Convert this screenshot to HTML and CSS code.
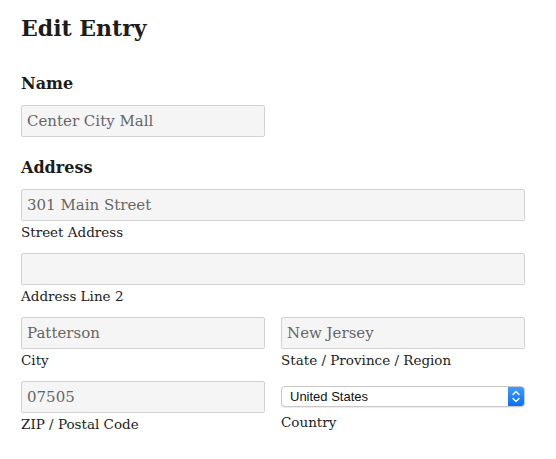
FILE: index.html
```html
<!DOCTYPE html>
<html>
<head>
<meta charset="utf-8">
<link rel="stylesheet" href="styles.css">
</head>
<body>
<div class="page">
  <h1 class="title">Edit Entry</h1>

  <div class="group">
    <div class="group-label">Name</div>
    <div class="half">
      <input class="field" type="text" value="Center City Mall">
    </div>
  </div>

  <div class="group">
    <div class="group-label">Address</div>
    <div class="item">
      <input class="field" type="text" value="301 Main Street">
      <div class="sub">Street Address</div>
    </div>
    <div class="item">
      <input class="field" type="text" value="">
      <div class="sub">Address Line 2</div>
    </div>
    <div class="grid">
      <div class="item">
        <input class="field" type="text" value="Patterson">
        <div class="sub">City</div>
      </div>
      <div class="item">
        <input class="field" type="text" value="New Jersey">
        <div class="sub">State / Province / Region</div>
      </div>
      <div class="item">
        <input class="field" type="text" value="07505">
        <div class="sub">ZIP / Postal Code</div>
      </div>
      <div class="item">
        <div class="select">
          <span class="select-text">United States</span>
          <span class="stepper">
            <svg width="8" height="13" viewBox="0 0 8 13">
              <path d="M1 4.5 L4 1.5 L7 4.5" fill="none" stroke="#fff" stroke-width="1.4" stroke-linecap="round" stroke-linejoin="round"/>
              <path d="M1 8.5 L4 11.5 L7 8.5" fill="none" stroke="#fff" stroke-width="1.4" stroke-linecap="round" stroke-linejoin="round"/>
            </svg>
          </span>
        </div>
        <div class="sub sub-select">Country</div>
      </div>
    </div>
  </div>
</div>
</body>
</html>
```

FILE: styles.css
```css
html, body {
  margin: 0;
  padding: 0;
  background: #ffffff;
}

.page {
  padding: 0 21px;
  width: 504px;
  font-family: "DejaVu Serif", "Liberation Serif", serif;
  color: #222222;
}

.title {
  margin: 13px 0 0 0;
  font-size: 22px;
  line-height: 30px;
  font-weight: bold;
  color: #1c1c1c;
}

.group-label {
  font-size: 16px;
  line-height: 20px;
  font-weight: bold;
  margin-bottom: 11px;
  color: #1c1c1c;
}

.group {
  margin-top: 31px;
}

.group + .group {
  margin-top: 21px;
}

.half {
  width: 244px;
}

.field {
  display: block;
  box-sizing: border-box;
  width: 100%;
  height: 32px;
  margin: 0;
  padding: 0 5px;
  border: 1px solid #d2d2d2;
  border-radius: 2px;
  background: #f5f5f5;
  font-family: "DejaVu Serif", "Liberation Serif", serif;
  font-size: 15px;
  color: #666666;
  outline: none;
}

.item {
  margin-bottom: 12px;
}

.sub {
  margin-top: 2px;
  font-size: 13.5px;
  line-height: 18px;
  color: #222222;
}

.grid {
  display: grid;
  grid-template-columns: 244px 244px;
  column-gap: 16px;
}

.select {
  box-sizing: border-box;
  display: flex;
  align-items: stretch;
  height: 21px;
  margin-top: 5px;
  border: 1px solid #c9c9c9;
  border-radius: 4px;
  background: #ffffff;
  overflow: hidden;
  box-shadow: 0 1px 1px rgba(0,0,0,0.08);
}

.select-text {
  flex: 1;
  padding-left: 8px;
  font-family: "Liberation Sans", Arial, sans-serif;
  font-size: 13px;
  line-height: 19px;
  color: #111111;
}

.stepper {
  width: 16px;
  display: flex;
  align-items: center;
  justify-content: center;
  background: linear-gradient(#3f9bfd, #0a6ff9);
}

.sub-select {
  margin-top: 6px;
}
```
